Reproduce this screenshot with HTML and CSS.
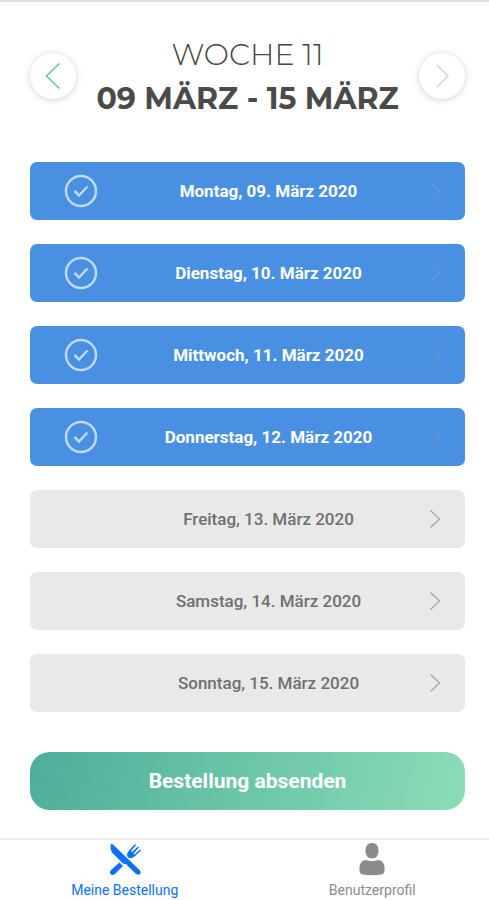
FILE: index.html
```html
<!DOCTYPE html>
<html lang="de">
<head>
<meta charset="utf-8">
<meta name="viewport" content="width=device-width, initial-scale=1">
<title>Meine Bestellung</title>
<link rel="stylesheet" href="styles.css">
</head>
<body>
<svg class="defs" aria-hidden="true">
  <symbol id="check" viewBox="0 0 34 34"><circle cx="17" cy="17" r="15" stroke-width="2.5"/><path d="M10.500 17l4.500 4.500 8.500-9" stroke-width="2.500"/></symbol>
  <symbol id="next" viewBox="0 0 12 20"><path d="M1.500 1.500L10.500 10l-9 8.500"/></symbol>
</svg>
<main class="page">
  <header class="week">
    <button class="round prev" type="button" aria-label="Vorherige Woche"><svg viewBox="0 0 16 28"><path d="M14.500 1.500L1.500 14 14.500 26.500"/></svg></button>
    <h1 class="title"><span class="number">WOCHE 11</span><span class="range">09 MÄRZ - 15 MÄRZ</span></h1>
    <button class="round following" type="button" aria-label="Nächste Woche"><svg viewBox="0 0 16 28"><path d="M3 3l11 11L3 25"/></svg></button>
  </header>
  <div class="days">
    <button class="day done" type="button"><svg class="check"><use href="#check"/></svg><span class="date">Montag, 09. März 2020</span><svg class="next"><use href="#next"/></svg></button>
    <button class="day done" type="button"><svg class="check"><use href="#check"/></svg><span class="date">Dienstag, 10. März 2020</span><svg class="next"><use href="#next"/></svg></button>
    <button class="day done" type="button"><svg class="check"><use href="#check"/></svg><span class="date">Mittwoch, 11. März 2020</span><svg class="next"><use href="#next"/></svg></button>
    <button class="day done" type="button"><svg class="check"><use href="#check"/></svg><span class="date">Donnerstag, 12. März 2020</span><svg class="next"><use href="#next"/></svg></button>
    <button class="day" type="button"><span class="date">Freitag, 13. März 2020</span><svg class="next"><use href="#next"/></svg></button>
    <button class="day" type="button"><span class="date">Samstag, 14. März 2020</span><svg class="next"><use href="#next"/></svg></button>
    <button class="day" type="button"><span class="date">Sonntag, 15. März 2020</span><svg class="next"><use href="#next"/></svg></button>
  </div>
  <button class="send" type="button">Bestellung absenden</button>
</main>
<nav class="tabs">
  <a class="tab active" href="#bestellung">
    <svg viewBox="0 0 34 34"><path d="M2.500 3Q3 1.500 5 2.500L31.500 28Q33.500 30.500 32 32 30 33.500 27.500 31.500L18 22Q16 22.500 14.500 21L4 10.500Q2 7 2.500 3z"/><path d="M11.500 20.500l3.500 3.500-8 8q-2.500 2-4.500 0-1.500-2 .5-4z"/><path d="M21 16l-2-2q-.5-3 2-5.500L27 2l1 1-5 6 1 1 6-5.500 1 1-5.500 6 1 1L32 7.500l1 1-6.500 6q-2.500 2-5.500 1.500z"/></svg>
    <span>Meine Bestellung</span>
  </a>
  <a class="tab" href="#profil">
    <svg viewBox="0 0 34 34"><path d="M17 1c4.500 0 6.500 3 6.500 7.500s-2 8-6.500 8-6.500-3.500-6.500-8S12.500 1 17 1z"/><path d="M10.500 18Q13.500 19 17 19t6.500-1Q28.500 18.500 29.500 25v3.500q0 3-3 4-9.500 1.500-19 0-3-1-3-4V25q1-6.500 6-7z"/></svg>
    <span>Benutzerprofil</span>
  </a>
</nav>
</body>
</html>
```
FILE: styles.css
```css
* { box-sizing: border-box; }

body {
  margin: 0;
  min-height: 100vh;
  display: flex;
  flex-direction: column;
  background: #fff;
  border-top: 2px solid #dfdfdf;
  font-family: Roboto, sans-serif;
}

button { border: 0; font: inherit; cursor: pointer; }
svg { display: block; fill: none; stroke: currentColor; }
.defs { position: absolute; width: 0; height: 0; }

.page {
  flex: 1;
  display: flex;
  flex-direction: column;
  padding: 28px 24px 28px 30px;
}

.week {
  display: flex;
  align-items: center;
  justify-content: space-between;
  margin-bottom: 41px;
}

.round {
  flex: none;
  width: 46px;
  height: 46px;
  padding: 0;
  display: grid;
  place-items: center;
  border-radius: 50%;
  background: #fff;
  box-shadow: 0 1px 7px rgba(0, 0, 0, 0.18);
}
.round svg { width: 16px; height: 28px; stroke-width: 1.5; }
.prev { color: #62c3a4; }
.following { color: #d4d4d4; }

.title {
  margin: 0;
  padding-top: 3px;
  display: flex;
  flex-direction: column;
  text-align: center;
  font-family: Montserrat, Inter, sans-serif;
  font-size: 30px;
  line-height: 44px;
  white-space: nowrap;
}
.number { color: #444; font-weight: 300; }
.range { color: #4a4a4a; font-weight: 700; }

.days { display: grid; gap: 24px; }

.day {
  display: grid;
  grid-template-columns: 44px 1fr 12px;
  align-items: center;
  width: 100%;
  height: 58px;
  padding: 0 24px 0 34px;
  border-radius: 7px;
  background: #e9e9e9;
  color: #707070;
  font-size: 17px;
  font-weight: 500;
}
.done { background: #4990e2; color: #fff; font-weight: 700; }
.check { width: 34px; height: 34px; color: #bfd9f7; }
.date { grid-column: 2; }
.next { width: 12px; height: 20px; color: #aaa; stroke-width: 1.5; }
.done .next { color: #6f93bd; }

.send {
  height: 58px;
  margin-top: 40px;
  border-radius: 20px;
  background: linear-gradient(105deg, #4dae9a, #8bddb7);
  color: #fff;
  font-size: 21px;
  font-weight: 700;
}

.tabs {
  display: grid;
  grid-template-columns: 1fr 1fr;
  gap: 14px;
  padding: 2px 0 0 8px;
  border-top: 2px solid #ededed;
}
.tab {
  display: flex;
  flex-direction: column;
  align-items: center;
  gap: 4px;
  color: #8b8b8d;
  font-size: 14px;
  line-height: 20px;
  text-decoration: none;
}
.tab svg { width: 34px; height: 34px; fill: currentColor; stroke: none; }
.active { color: #0b70fb; }
```
